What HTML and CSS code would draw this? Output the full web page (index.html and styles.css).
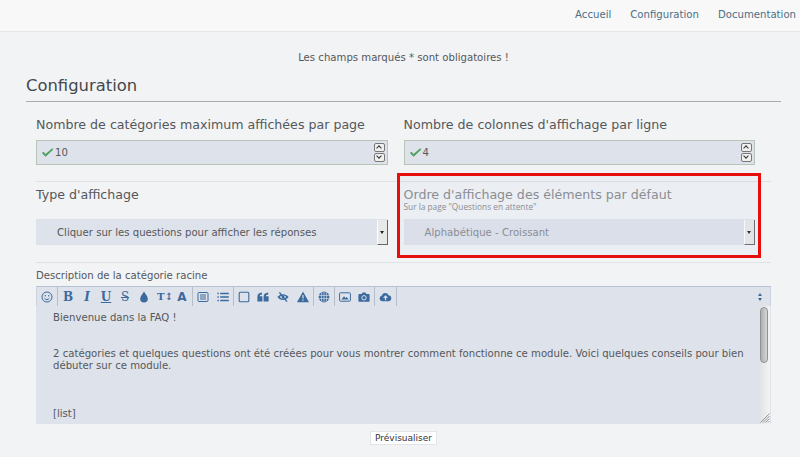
FILE: index.html
```html
<!DOCTYPE html>
<html lang="fr">
<head>
    <meta charset="UTF-8">
    <meta name="viewport" content="width=device-width, initial-scale=1.0">
    <title>Configuration</title>
    <link rel="stylesheet" href="styles.css">
</head>
<body>
    <nav class="topnav">
        <a href="#">Accueil</a>
        <a href="#">Configuration</a>
        <a href="#">Documentation</a>
    </nav>

    <main class="content">
        <p class="required">Les champs marqués * sont obligatoires !</p>
        <h1 class="title">Configuration</h1>

        <div class="row row-numbers">
            <div class="field">
                <label class="label">Nombre de catégories maximum affichées par page</label>
                <div class="number">
                    <svg class="check" viewBox="0 0 14 11"><path d="M1 6 L2.6 4.6 L5 7 L12 1 L13.2 2.2 L5 10 Z"/></svg>
                    <span class="value">10</span>
                    <span class="spin"><i class="up"></i><i class="down"></i></span>
                </div>
            </div>
            <div class="field">
                <label class="label">Nombre de colonnes d'affichage par ligne</label>
                <div class="number">
                    <svg class="check" viewBox="0 0 14 11"><path d="M1 6 L2.6 4.6 L5 7 L12 1 L13.2 2.2 L5 10 Z"/></svg>
                    <span class="value">4</span>
                    <span class="spin"><i class="up"></i><i class="down"></i></span>
                </div>
            </div>
        </div>

        <div class="row row-selects">
            <div class="field">
                <label class="label">Type d'affichage</label>
                <div class="select select-low">
                    <span>Cliquer sur les questions pour afficher les réponses</span>
                    <b class="arrow"></b>
                </div>
            </div>
            <div class="field">
                <div class="faded">
                    <label class="label">Ordre d'affichage des éléments par défaut</label>
                    <small class="hint">Sur la page "Questions en attente"</small>
                    <div class="select">
                        <span>Alphabétique - Croissant</span>
                        <b class="arrow"></b>
                    </div>
                </div>
                <div class="highlight"></div>
            </div>
        </div>

        <label class="label-small">Description de la catégorie racine</label>
        <div class="editor">
            <div class="toolbar">
                <div class="group">
                    <svg viewBox="0 0 12 12"><circle cx="6" cy="6" r="5" fill="none" stroke-width="1"/><circle cx="4.3" cy="4.8" r=".7"/><circle cx="7.7" cy="4.8" r=".7"/><path d="M3.6 7.2 C4.6 9 7.4 9 8.4 7.2" fill="none" stroke-width="1"/></svg>
                </div>
                <div class="group">
                    <span class="txt bold">B</span>
                    <span class="txt ital">I</span>
                    <span class="txt under">U</span>
                    <span class="txt strike">S</span>
                    <svg viewBox="0 0 12 12"><path d="M6 .6 C7.6 3.4 9.8 5.4 9.8 7.8 A3.8 3.8 0 0 1 2.2 7.8 C2.2 5.4 4.4 3.4 6 .6 Z"/></svg>
                    <span class="txt size">T↕</span>
                    <span class="txt letter">A</span>
                </div>
                <div class="group group-wide">
                    <svg viewBox="0 0 12 12"><rect x="1" y="1.5" width="10" height="9" rx="1" fill="none" stroke-width="1"/><path d="M3 4 H9 M3 6 H9 M3 8 H9" fill="none" stroke-width="1"/></svg>
                    <svg viewBox="0 0 12 12"><path d="M.4 2.5 H1.8 M3.2 2.5 H11.8 M.4 6 H1.8 M3.2 6 H11.8 M.4 9.5 H1.8 M3.2 9.5 H11.8" fill="none" stroke-width="1.4"/></svg>
                </div>
                <div class="group group-wide">
                    <svg viewBox="0 0 12 12"><rect x="1.2" y="1.2" width="9.6" height="9.6" rx="1" fill="none" stroke-width="1.1"/></svg>
                    <svg viewBox="0 0 12 12"><path d="M.4 6 C.4 3.2 2 1.8 5 1.6 V3.6 C3.4 3.8 2.8 4.4 2.7 5.3 H5.4 V10.4 H.4 Z M6.6 6 C6.6 3.2 8.2 1.8 11.2 1.6 V3.6 C9.6 3.8 9 4.4 8.9 5.3 H11.6 V10.4 H6.6 Z"/></svg>
                    <svg viewBox="0 0 12 12"><path d="M.4 6 C3 2.4 8.4 2 11.6 6 C8.8 9.8 3.4 10.2 .4 6 Z M2.8 6 C4.6 8 7.4 8 9.2 6 C7.4 4 4.6 4 2.8 6 Z" fill-rule="evenodd"/><circle cx="6" cy="6" r="1.4"/><path d="M2.4 1.4 L10 10.6" fill="none" stroke-width="1.4"/></svg>
                    <svg viewBox="0 0 12 12"><path d="M6 .4 L12 11.2 H0 Z"/><path d="M6 4 V7.6 M6 8.6 V9.8" fill="none" stroke="#dee2ea" stroke-width="1.2"/></svg>
                </div>
                <div class="group">
                    <svg viewBox="0 0 12 12"><circle cx="6" cy="6" r="5.4"/><path d="M.6 4.4 H11.4 M.6 7.6 H11.4 M6 .6 V11.4 M3.9 1.2 C3.2 4.4 3.2 7.6 3.9 10.8 M8.1 1.2 C8.8 4.4 8.8 7.6 8.1 10.8" fill="none" stroke="#dee2ea" stroke-width=".7"/></svg>
                </div>
                <div class="group">
                    <svg viewBox="0 0 12 12"><rect x=".6" y="1.8" width="10.8" height="8.4" rx=".8" fill="none" stroke-width="1"/><path d="M2.4 8.6 L5 5.2 L6.6 7 L7.8 6 L9.6 8.6 Z"/></svg>
                    <svg viewBox="0 0 12 12"><path d="M1.4 3 H3.6 L4.6 1.4 H7.4 L8.4 3 H10.6 A1 1 0 0 1 11.6 4 V9.8 A1 1 0 0 1 10.6 10.8 H1.4 A1 1 0 0 1 .4 9.8 V4 A1 1 0 0 1 1.4 3 Z"/><circle cx="6" cy="6.8" r="2.2" fill="none" stroke="#dee2ea" stroke-width="1"/></svg>
                </div>
                <div class="group">
                    <svg class="wide" viewBox="0 0 14 12"><path d="M3.4 10.6 A3 3 0 0 1 2.9 4.7 A3.9 3.9 0 0 1 10.3 4.1 A3.3 3.3 0 0 1 10.8 10.6 Z"/><path d="M7 9.6 V5.2 M5 7 L7 5 L9 7" fill="none" stroke="#dee2ea" stroke-width="1.3"/></svg>
                </div>
                <span class="more"></span>
            </div>
            <div class="textarea">
                <div class="text">
                    <p>Bienvenue dans la FAQ !</p>
                    <p class="gap">2 catégories et quelques questions ont été créées pour vous montrer comment fonctionne ce module. Voici quelques conseils pour bien débuter sur ce module.</p>
                    <p class="gap">[list]</p>
                </div>
                <div class="scrollbar"><div class="thumb"></div></div>
                <svg class="grip" viewBox="0 0 10 10"><path d="M9.5 .5 L.5 9.5 M9.5 3 L3 9.5 M9.5 5.5 L5.5 9.5 M9.5 8 L8 9.5" fill="none" stroke="#6c7278" stroke-width=".7"/></svg>
            </div>
        </div>
        <div class="actions"><button class="preview" type="button">Prévisualiser</button></div>
    </main>
</body>
</html>
```

FILE: styles.css
```css
* {
    box-sizing: border-box;
}
html, body {
    height: 457px;
    overflow: hidden;
}
body {
    margin: 0;
    background-color: #f1f3f5;
    color: #55585b;
    font-family: "DejaVu Sans", sans-serif;
}
.topnav {
    display: flex;
    justify-content: flex-end;
    gap: 19px;
    height: 32px;
    padding: 9px 4px 0 0;
    background-color: #f8f8f8;
    border-bottom: 1px solid #e4e6e8;
    font-size: 10.15px;
}
.topnav a {
    color: #4b6f86;
    text-decoration: none;
}
.content {
    padding: 0 19px 0 26px;
}
.required {
    margin: 19px 0 0;
    text-align: center;
    font-size: 10.15px;
    line-height: 13px;
}
.title {
    margin: 10px 0 0;
    padding-bottom: 4px;
    border-bottom: 1px solid #a9abad;
    font-size: 16.4px;
    font-weight: normal;
    line-height: 23px;
    color: #45484b;
}
.row {
    display: flex;
    gap: 16px;
    margin: 0 10px;
    border-bottom: 1px solid #dfe2e5;
}
.row-numbers {
    height: 80px;
    padding-top: 14px;
}
.row-selects {
    height: 81px;
    padding-top: 4px;
}
.field {
    position: relative;
    width: 351.5px;
}
.faded {
    color: #85888c;
}
.label {
    display: block;
    font-size: 12.62px;
    line-height: 17px;
}
.faded .label {
    padding-top: 1px;
    line-height: 15px;
}
.hint {
    display: block;
    font-size: 8.3px;
    line-height: 9px;
    font-family: "Open Sans", sans-serif;
}
.number {
    display: flex;
    align-items: center;
    height: 25px;
    margin-top: 7px;
    padding-left: 4px;
    background-color: #dee2ea;
    border: 1px solid #b9c4b9;
    font-size: 10.15px;
}
.check {
    width: 13px;
    height: 11px;
    fill: #4fa05f;
}
.value {
    margin-left: 1px;
    flex: 1;
}
.spin {
    display: flex;
    flex-direction: column;
    gap: 1px;
    margin-right: 2px;
}
.spin i {
    position: relative;
    display: block;
    width: 11px;
    height: 9px;
    background-color: #f0f0f0;
    border: 1px solid #777;
    border-radius: 2px;
}
.spin i::after {
    content: "";
    position: absolute;
    left: 2px;
    width: 3px;
    height: 3px;
    border-left: 1px solid #333;
    border-top: 1px solid #333;
}
.spin .up::after {
    top: 2px;
    transform: rotate(45deg);
}
.spin .down::after {
    top: 0;
    transform: rotate(225deg);
}
.select {
    display: flex;
    align-items: center;
    justify-content: space-between;
    height: 26px;
    margin-top: 8px;
    padding: 0 0 0 21px;
    background-color: #dee2ea;
    font-size: 10.15px;
}
.select-low {
    margin-top: 16px;
}
.arrow {
    position: relative;
    display: block;
    width: 11px;
    height: 25px;
    background-color: #e8e8e8;
    border-right: 1px solid #666;
    border-bottom: 1px solid #666;
    border-left: 1px solid #fff;
}
.arrow::after {
    content: "";
    position: absolute;
    left: 2px;
    top: 11px;
    border-left: 2.5px solid transparent;
    border-right: 2.5px solid transparent;
    border-top: 3px solid #222;
}
.highlight {
    position: absolute;
    left: -6.5px;
    top: -13px;
    width: 364px;
    height: 85px;
    border: 3px solid #e80e0e;
    background-color: rgba(190, 195, 225, .1);
}
.label-small {
    display: block;
    margin: 6px 10px 0;
    font-size: 10.15px;
    line-height: 14px;
}
.editor {
    margin: 3px 10px 0;
    width: 735px;
    background-color: #dee2ea;
}
.toolbar {
    display: flex;
    align-items: center;
    height: 20px;
    border-top: 1px solid #b5c0d0;
    border-left: 1px solid #c9d2de;
    border-right: 1px solid #c9d2de;
}
.group {
    display: flex;
    align-items: center;
    gap: 7px;
    height: 19px;
    padding: 0 4px;
    border-right: 1px solid #b6bec9;
    color: #3b6a9e;
}
.group-wide {
    gap: 7.7px;
}
.group svg {
    width: 12px;
    height: 12px;
    fill: #3b6a9e;
    stroke: #3b6a9e;
    stroke-width: 0;
}
.group svg.wide {
    width: 13px;
}
.txt {
    display: block;
    width: 12px;
    text-align: center;
    font-family: "DejaVu Serif", serif;
    font-size: 12px;
    line-height: 12px;
}
.bold, .under, .size, .letter {
    font-weight: bold;
}
.ital {
    font-style: italic;
    font-weight: bold;
}
.under {
    text-decoration: underline;
}
.strike {
    text-decoration: line-through;
}
.size {
    font-size: 10px;
    white-space: nowrap;
}
.letter {
    font-family: "DejaVu Sans", sans-serif;
    font-size: 12px;
}
.more {
    position: relative;
    margin-left: auto;
    margin-right: 7px;
    width: 5px;
    height: 8px;
}
.more::before, .more::after {
    content: "";
    position: absolute;
    left: 0;
    border-left: 2.5px solid transparent;
    border-right: 2.5px solid transparent;
}
.more::before {
    top: 0;
    border-bottom: 3px solid #3b6a9e;
}
.more::after {
    bottom: 0;
    border-top: 3px solid #3b6a9e;
}
.textarea {
    position: relative;
    height: 118px;
    padding: 6px 22px 0 17px;
    overflow: hidden;
    font-size: 10.15px;
    line-height: 12px;
}
.text p {
    margin: 0;
}
.text .gap {
    margin-top: 24px;
}
.text p:last-child {
    margin-top: 36px;
}
.scrollbar {
    position: absolute;
    right: 1px;
    top: 0;
    bottom: 0;
    width: 11px;
    padding: 1px;
    background: linear-gradient(to right, #dfe1e3, #f4f4f4);
}
.thumb {
    width: 8px;
    height: 56px;
    background: linear-gradient(to right, #aeb0b2, #d4d5d7);
    border: 1px solid #8f9193;
    border-radius: 4px;
}
.grip {
    position: absolute;
    right: 1px;
    bottom: 1px;
    width: 10px;
    height: 10px;
}
.actions {
    display: flex;
    justify-content: center;
    margin-top: 7px;
}
.preview {
    height: 14px;
    padding: 0 4px;
    background-color: #fff;
    border: 1px solid #e2e4e6;
    color: #333;
    font-family: "DejaVu Sans", sans-serif;
    font-size: 9px;
    line-height: 12px;
}
```
